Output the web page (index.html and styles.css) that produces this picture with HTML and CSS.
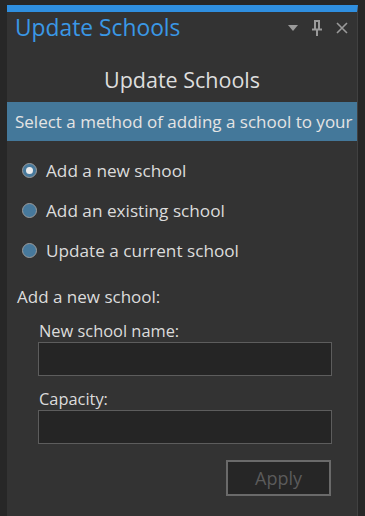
FILE: index.html
```html
<!DOCTYPE html>
<html lang="en">
<head>
    <meta charset="UTF-8">
    <meta name="viewport" content="width=device-width, initial-scale=1.0">
    <title>Update Schools</title>
    <link rel="stylesheet" href="styles.css">
</head>
<body>
    <div class="pane">
        <div class="pane-header">
            <span class="pane-title">Update Schools</span>
            <div class="pane-tools">
                <!-- options menu -->
                <svg width="10" height="6" viewBox="0 0 10 6"><path d="M0 0h10L5 6z" fill="#9a9a9a"/></svg>
                <!-- pin -->
                <svg width="12" height="16" viewBox="0 0 12 16"><path d="M3 1h6M4 1v8M8 1v8M1 9.5h10M6 10v6" stroke="#9a9a9a" stroke-width="2" fill="none"/></svg>
                <!-- close -->
                <svg width="12" height="12" viewBox="0 0 12 12"><path d="M1 1l10 10M11 1L1 11" stroke="#9a9a9a" stroke-width="1.6"/></svg>
            </div>
        </div>

        <h2 class="form-title">Update Schools</h2>
        <div class="banner">Select a method of adding a school to your project</div>

        <div class="options">
            <label class="option"><input type="radio" name="method" checked><span class="radio"></span>Add a new school</label>
            <label class="option"><input type="radio" name="method"><span class="radio"></span>Add an existing school</label>
            <label class="option"><input type="radio" name="method"><span class="radio"></span>Update a current school</label>
        </div>

        <div class="section">
            <div class="section-title">Add a new school:</div>
            <div class="field">
                <label for="schoolName">New school name:</label>
                <input type="text" id="schoolName">
            </div>
            <div class="field">
                <label for="capacity">Capacity:</label>
                <input type="text" id="capacity">
            </div>
            <div class="actions">
                <button class="apply-button" disabled>Apply</button>
            </div>
        </div>
    </div>
</body>
</html>
```

FILE: styles.css
```css
body {
    margin: 0;
    padding-top: 5px;
    background-color: #272727;
    font-family: "Open Sans", "Noto Sans", sans-serif;
    color: #dcdcdc;
    overflow: hidden;
}
.pane {
    margin-left: 7px;
    width: 350px;
    height: 520px;
    background-color: #333333;
    border-top: 7px solid #2f8fe0;
    border-right: 1px solid #414141;
}
.pane-header {
    display: flex;
    justify-content: space-between;
    align-items: center;
    height: 31px;
    padding: 0 9px 0 8px;
}
.pane-title {
    font-size: 22.8px;
    color: #3a98e6;
}
.pane-tools {
    display: flex;
    align-items: center;
    gap: 13px;
}
.form-title {
    margin: 22px 0 0;
    height: 37px;
    line-height: 30px;
    font-size: 21.5px;
    font-weight: normal;
    text-align: center;
    color: #dedede;
}
.banner {
    height: 39px;
    line-height: 39px;
    padding-left: 8px;
    background-color: #44789a;
    color: #e4e4e4;
    font-size: 17px;
    white-space: nowrap;
    overflow: hidden;
}
.options {
    display: flex;
    flex-direction: column;
    gap: 18px;
    padding: 18px 0 0 15px;
}
.option {
    display: flex;
    align-items: center;
    height: 22px;
    font-size: 17.2px;
}
.option input {
    display: none;
}
.radio {
    width: 13px;
    height: 13px;
    margin-right: 9px;
    border: 1px solid #9c9c9c;
    border-radius: 50%;
    background-color: #47799c;
    display: flex;
    align-items: center;
    justify-content: center;
}
.option input:checked + .radio::after {
    content: "";
    width: 7px;
    height: 7px;
    border-radius: 50%;
    background-color: #ececec;
}
.section {
    padding: 24px 26px 0 10px;
}
.section-title {
    font-size: 17px;
    height: 24px;
    line-height: 24px;
}
.field {
    margin: 0 0 0 22px;
    padding-top: 11px;
}
.field + .field {
    padding-top: 12px;
}
.field label {
    display: block;
    font-size: 16.4px;
    height: 22px;
    line-height: 22px;
}
.field input {
    display: block;
    box-sizing: border-box;
    width: 294px;
    height: 34px;
    margin-left: -1px;
    background-color: #252525;
    border: 1px solid #5d5d5d;
    color: #dcdcdc;
}
.actions {
    display: flex;
    justify-content: flex-end;
    padding-top: 16px;
}
.apply-button {
    width: 105px;
    height: 36px;
    background-color: #262626;
    border: 2px solid #6a6a6a;
    color: #5b5b5b;
    font-family: "Open Sans", "Noto Sans", sans-serif;
    font-size: 18px;
}
```
